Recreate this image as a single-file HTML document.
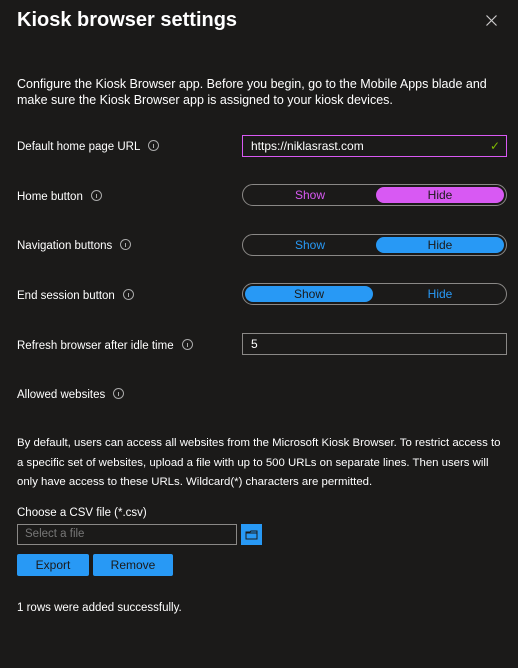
<!DOCTYPE html>
<html><head><style>
*{margin:0;padding:0;box-sizing:border-box}
body{width:518px;height:668px;background:#1b1a19;color:#fff;font-family:"Liberation Sans",sans-serif;font-size:11.5px;position:relative;overflow:hidden}
.a{position:absolute;white-space:nowrap}
.t{font-size:20px;font-weight:bold;left:17px;top:9px}
.i{display:inline-block;width:11px;height:11px;border:1px solid #aaa;border-radius:50%;margin-left:8px;vertical-align:-1px;position:relative}
.i:after{content:"";position:absolute;left:4px;top:3px;width:1px;height:4px;background:#aaa}
.tog{position:absolute;left:242px;width:265px;height:22px;border:1px solid #8a8886;border-radius:11px}
.tog span{position:absolute;top:2px;height:16px;width:128px;border-radius:8px;text-align:center;line-height:16px;font-size:12px}
.inp{position:absolute;left:242px;width:265px;height:22px;border:1px solid #8a8886;padding-left:8px;line-height:20px;font-size:12px}
.btn{position:absolute;top:554px;height:22px;background:#2899f5;color:#1b1a19;text-align:center;line-height:22px;border-radius:2px;font-size:12px}
</style></head><body>
<div class="a t">Kiosk browser settings</div>
<svg class="a" style="left:486px;top:15px" width="11" height="11"><path d="M0.5 0.5L10.5 10.5M10.5 0.5L0.5 10.5" stroke="#ccc" stroke-width="1.2"/></svg>
<div class="a" style="left:17px;top:76px;line-height:16px;font-size:12.5px">Configure the Kiosk Browser app. Before you begin, go to the Mobile Apps blade and<br>make sure the Kiosk Browser app is assigned to your kiosk devices.</div>

<div class="a" style="left:17px;top:140px">Default home page URL<span class="i"></span></div>
<div class="inp" style="top:135px;border-color:#d859f3">https://niklasrast.com<span style="position:absolute;right:6px;color:#7fba00">✓</span></div>

<div class="a" style="left:17px;top:190px">Home button<span class="i"></span></div>
<div class="tog" style="top:184px"><span style="left:3px;color:#d859f3">Show</span><span style="left:133px;background:#d859f3;color:#1b1a19">Hide</span></div>

<div class="a" style="left:17px;top:239px">Navigation buttons<span class="i"></span></div>
<div class="tog" style="top:234px"><span style="left:3px;color:#2899f5">Show</span><span style="left:133px;background:#2899f5;color:#1b1a19">Hide</span></div>

<div class="a" style="left:17px;top:289px">End session button<span class="i"></span></div>
<div class="tog" style="top:283px"><span style="left:2px;background:#2899f5;color:#1b1a19">Show</span><span style="left:133px;color:#2899f5">Hide</span></div>

<div class="a" style="left:17px;top:339px">Refresh browser after idle time<span class="i"></span></div>
<div class="inp" style="top:333px">5</div>

<div class="a" style="left:17px;top:388px">Allowed websites<span class="i"></span></div>

<div class="a" style="left:17px;top:434px;line-height:19.5px;font-size:11.4px">By default, users can access all websites from the Microsoft Kiosk Browser. To restrict access to<br>a specific set of websites, upload a file with up to 500 URLs on separate lines. Then users will<br>only have access to these URLs. Wildcard(*) characters are permitted.</div>

<div class="a" style="left:17px;top:507px">Choose a CSV file (*.csv)</div>
<div class="a" style="left:17px;top:524px;width:220px;height:21px;border:1px solid #8a8886;color:#777;padding-left:7px;line-height:19px">Select a file</div>
<div class="a" style="left:241px;top:524px;width:21px;height:21px;background:#2899f5">
<svg width="21" height="21"><path d="M5 8h4l1 -1h6v8h-11z M5 9h11" fill="none" stroke="#1b1a19" stroke-width="1"/></svg></div>
<div class="btn" style="left:17px;width:72px">Export</div>
<div class="btn" style="left:93px;width:80px">Remove</div>
<div class="a" style="left:17px;top:602px">1 rows were added successfully.</div>
</body></html>
